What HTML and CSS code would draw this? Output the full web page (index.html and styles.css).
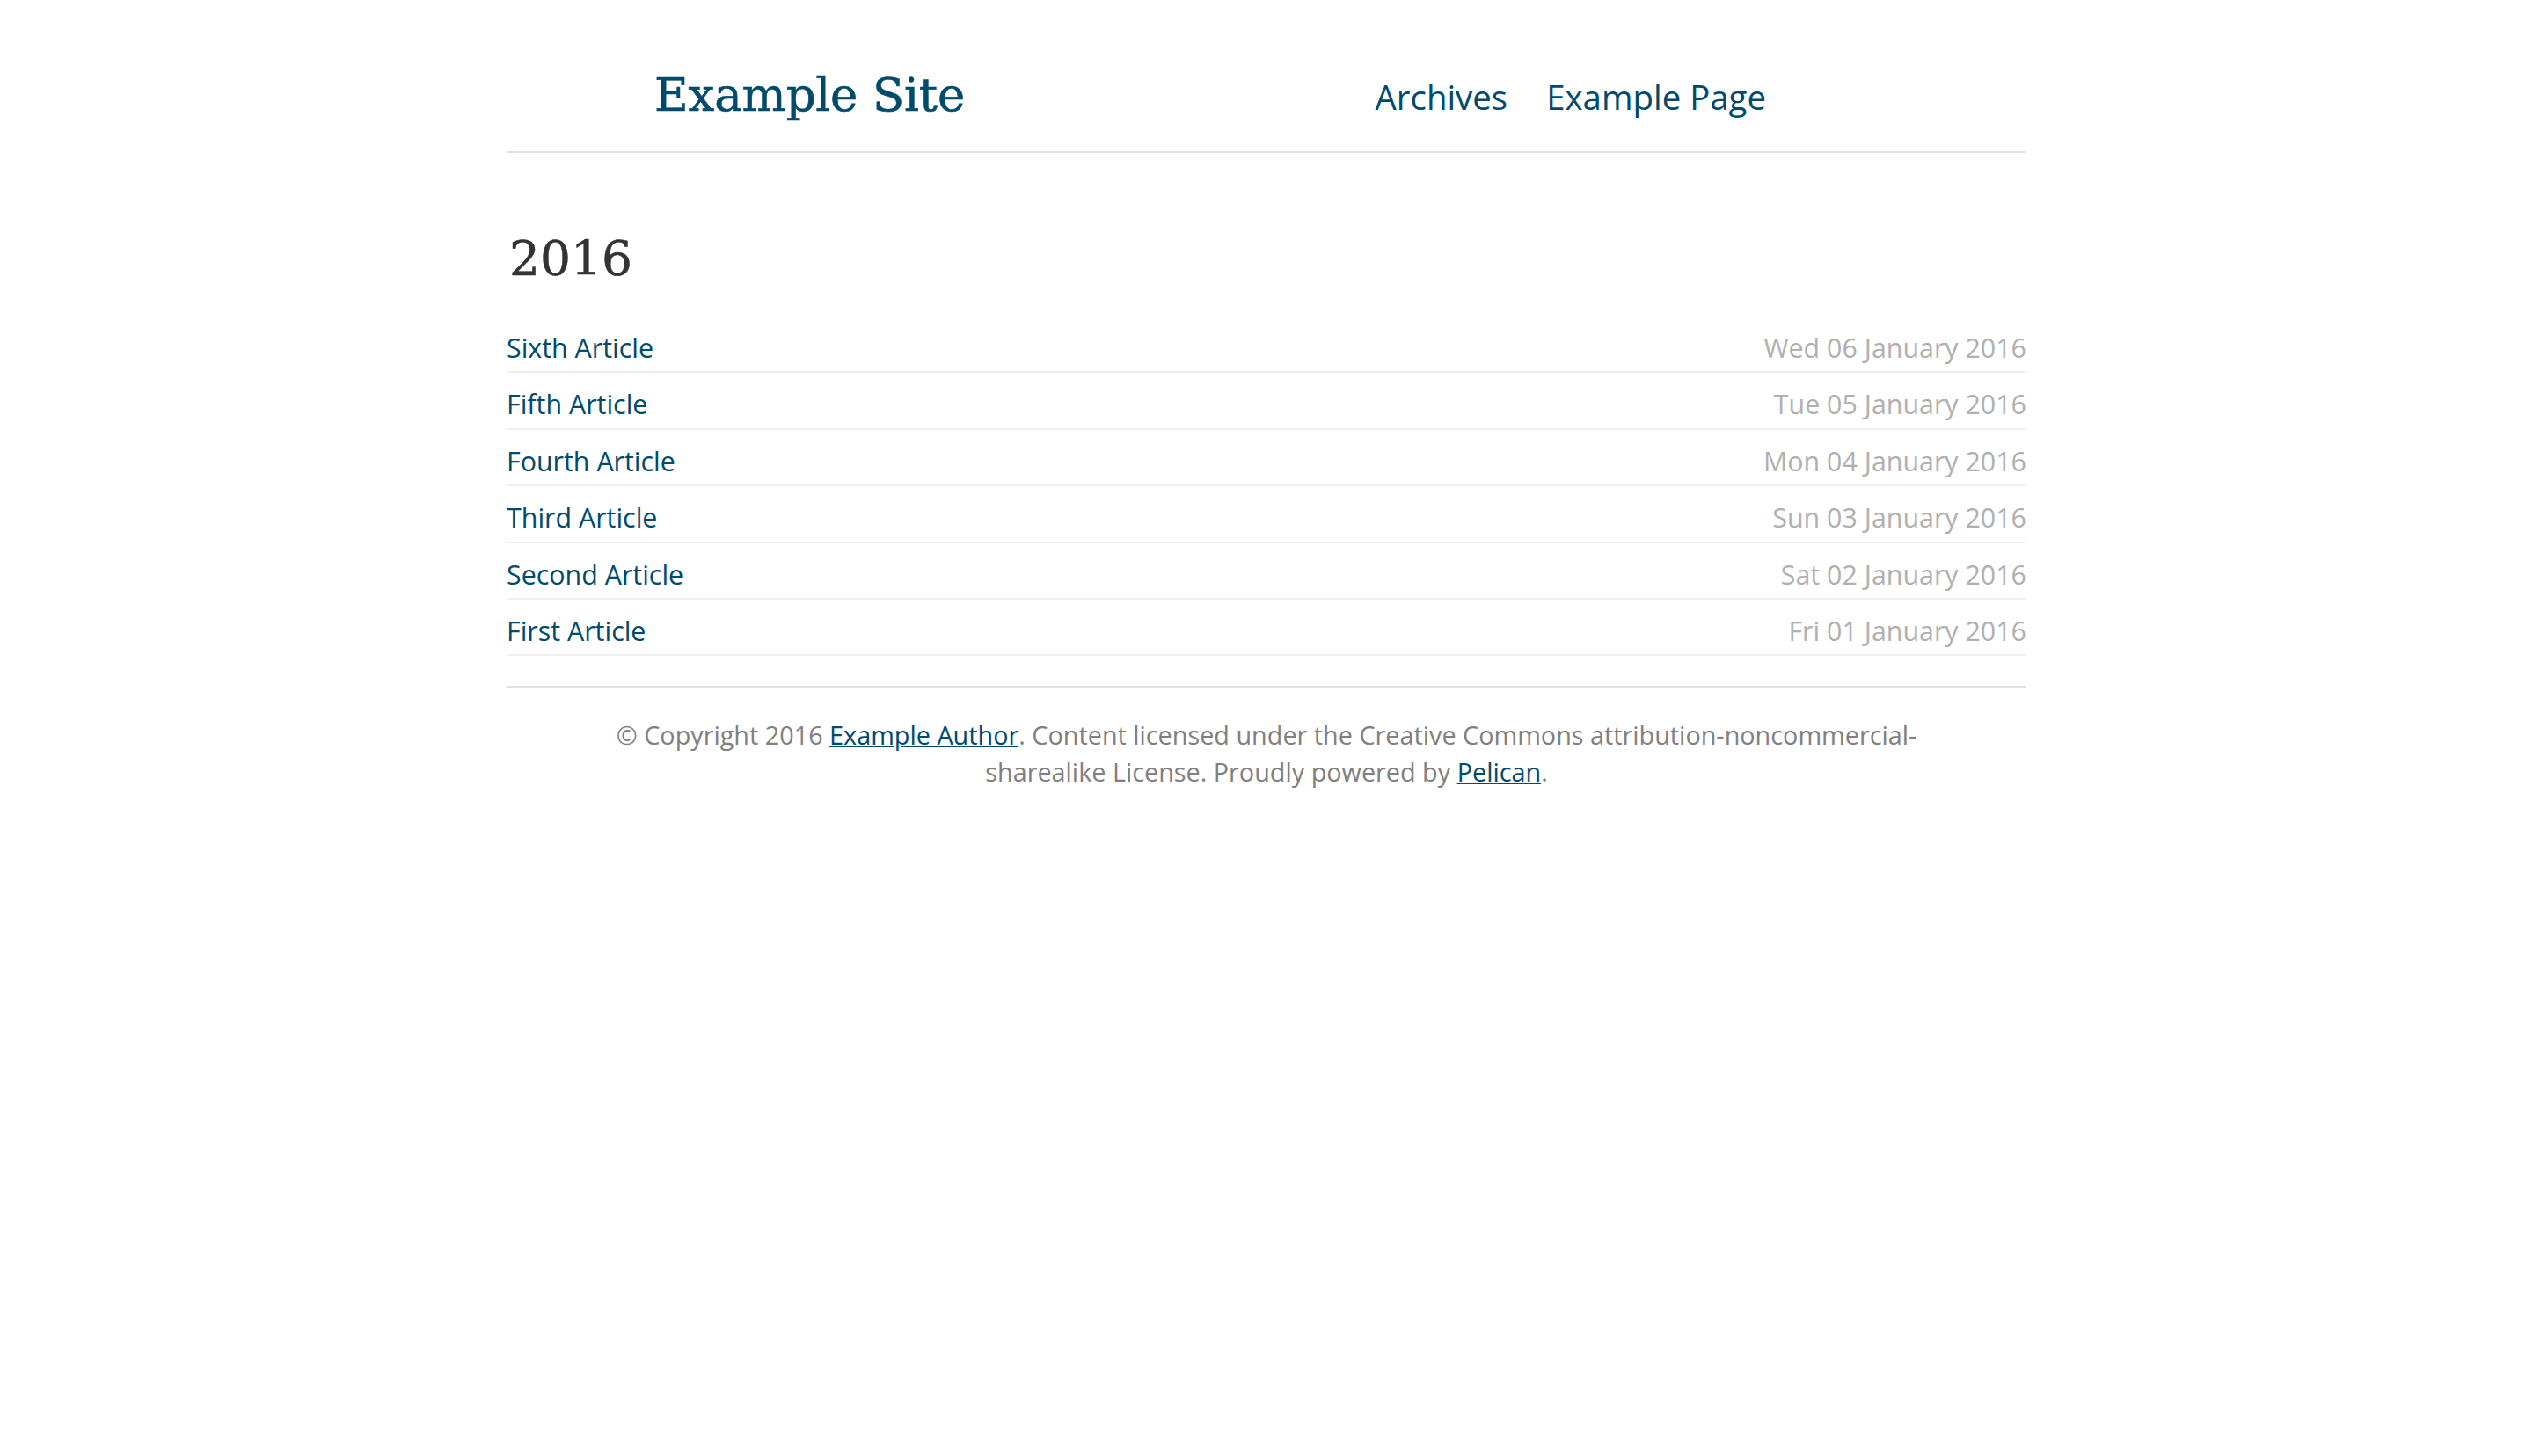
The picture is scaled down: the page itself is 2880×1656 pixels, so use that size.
FILE: index.html
```html
<!DOCTYPE html>
<html lang="en">
<head>
<meta charset="utf-8">
<title>Example Site - Archives</title>
<link rel="stylesheet" href="styles.css">
</head>
<body>
<div class="wrap">
  <header class="banner">
    <a class="site-title" href="#">Example Site</a>
    <nav class="menu">
      <a href="#">Archives</a>
      <a href="#">Example Page</a>
    </nav>
  </header>
  <main class="content">
    <h2 class="year">2016</h2>
    <ul class="post-list">
      <li><a href="#">Sixth Article</a><span class="date">Wed 06 January 2016</span></li>
      <li><a href="#">Fifth Article</a><span class="date">Tue 05 January 2016</span></li>
      <li><a href="#">Fourth Article</a><span class="date">Mon 04 January 2016</span></li>
      <li><a href="#">Third Article</a><span class="date">Sun 03 January 2016</span></li>
      <li><a href="#">Second Article</a><span class="date">Sat 02 January 2016</span></li>
      <li><a href="#">First Article</a><span class="date">Fri 01 January 2016</span></li>
    </ul>
  </main>
  <footer class="footer">
    <p>© Copyright 2016 <a href="#">Example Author</a>. Content licensed under the Creative Commons attribution-noncommercial-sharealike License. Proudly powered by <a href="#">Pelican</a>.</p>
  </footer>
</div>
</body>
</html>
```

FILE: styles.css
```css
html, body {
  margin: 0;
  padding: 0;
  background: #ffffff;
}

body {
  font-family: "Open Sans", "Noto Sans", sans-serif;
  color: #333333;
}

a {
  color: #004b6b;
  text-decoration: none;
}

.wrap {
  width: 1728px;
  margin: 0 auto;
}

.banner {
  display: flex;
  align-items: flex-end;
  justify-content: space-between;
  padding: 81px 296px 38px 168px;
  border-bottom: 2px solid #e0e0e0;
}

.site-title {
  font-family: "DejaVu Serif", "Liberation Serif", serif;
  font-size: 53px;
  line-height: 53px;
  letter-spacing: -0.2px;
  color: #004b6b;
  -webkit-text-stroke: 0.6px #004b6b;
}

.menu {
  display: flex;
  gap: 44px;
  margin-bottom: 5px;
}

.menu a {
  font-size: 38.4px;
  line-height: 38.4px;
}

.content {
  padding-top: 93px;
}

.year {
  margin: 0;
  font-family: "DejaVu Serif", "Liberation Serif", serif;
  font-weight: normal;
  font-size: 55px;
  line-height: 55px;
  color: #333333;
  padding-left: 3px;
  -webkit-text-stroke: 0.5px #333333;
}

.post-list {
  list-style: none;
  margin: 38px 0 0;
  padding: 0;
}

.post-list li {
  display: flex;
  justify-content: space-between;
  align-items: baseline;
  font-size: 30.4px;
  line-height: 41.4px;
  padding: 15px 0 6px;
  border-bottom: 2px solid #efefef;
}

.date {
  color: #b0b0b0;
}

.footer {
  margin-top: 34px;
  border-top: 2px solid #e0e0e0;
  padding-top: 33px;
}

.footer p {
  max-width: 1540px;
  margin: 0 auto;
  text-align: center;
  font-size: 28.8px;
  line-height: 42px;
  color: #808080;
}

.footer a {
  text-decoration: underline;
  text-decoration-thickness: 2px;
}
```
